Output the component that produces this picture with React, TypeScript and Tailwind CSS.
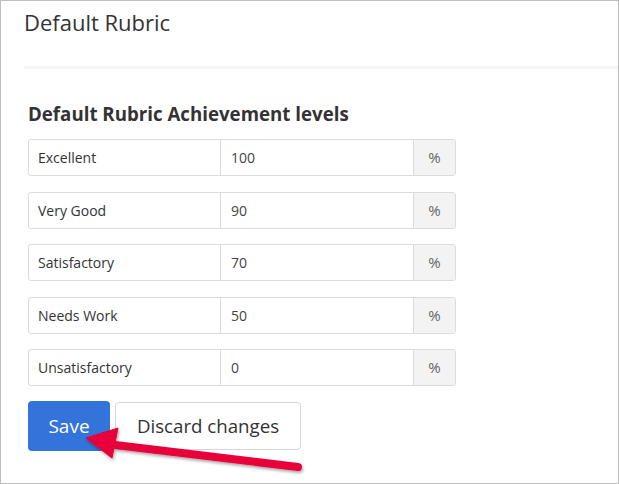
import React from 'react'

const levels = [
  { name: 'Excellent', value: '100' },
  { name: 'Very Good', value: '90' },
  { name: 'Satisfactory', value: '70' },
  { name: 'Needs Work', value: '50' },
  { name: 'Unsatisfactory', value: '0' },
]

const LevelRow: React.FC<{ name: string; value: string }> = ({ name, value }) => (
  <div className="flex h-[37px] w-[428px] rounded-[3px] border border-[#dcdcdc] text-[14px] text-[#333]">
    <div className="flex w-[192px] items-center border-r border-[#dcdcdc] pl-[9px]">{name}</div>
    <div className="flex w-[193px] items-center border-r border-[#dcdcdc] pl-[10px] text-[#444]">{value}</div>
    <div className="flex flex-1 items-center justify-center rounded-r-[3px] bg-[#f3f3f3] text-[15px] text-[#666]">%</div>
  </div>
)

export default function App() {
  return (
    <div className="relative h-[484px] w-[619px] overflow-hidden border border-[#bdbdbd] bg-white font-['Open_Sans',sans-serif] text-[#333]">
      {/* Page header */}
      <div className="pl-[23px] pt-[7px]">
        <h1 className="text-[22px] leading-[29px] text-[#333]">Default Rubric</h1>
        <div className="mt-[29px] h-[3px] bg-[#f4f4f4]" />
      </div>

      {/* Achievement levels */}
      <div className="pl-[27px] pt-[33px]">
        <h2 className="text-[18.7px] font-bold leading-[24px] text-[#333]">
          Default Rubric Achievement levels
        </h2>
        <div className="mt-[13px] flex flex-col gap-[15.5px]">
          {levels.map(l => (
            <LevelRow key={l.name} name={l.name} value={l.value} />
          ))}
        </div>

        {/* Footer */}
        <div className="mt-[15px] flex items-center gap-[5px]">
          <button className="h-[50px] w-[82px] rounded-[4px] bg-[#3274d9] text-[19px] text-white">
            Save
          </button>
          <button className="h-[48px] w-[186px] rounded-[4px] border border-[#d6d6d6] bg-white text-[18.7px] text-[#333]">
            Discard changes
          </button>
        </div>
      </div>

      {/* red annotation arrow */}
      <svg className="absolute left-0 top-0" width="619" height="484" viewBox="0 0 619 484">
        <defs>
          <filter id="sh" x="-20%" y="-50%" width="140%" height="200%">
            <feDropShadow dx="1" dy="2" stdDeviation="1.5" floodColor="#000" floodOpacity="0.35" />
          </filter>
        </defs>
        <g filter="url(#sh)" fill="#e8003a" stroke="#e8003a">
          <line x1="106" y1="443" x2="297" y2="466" strokeWidth="8" strokeLinecap="round" />
          <polygon points="85,437 117,427 111,457" strokeWidth="1" strokeLinejoin="round" />
        </g>
      </svg>
    </div>
  )
}
